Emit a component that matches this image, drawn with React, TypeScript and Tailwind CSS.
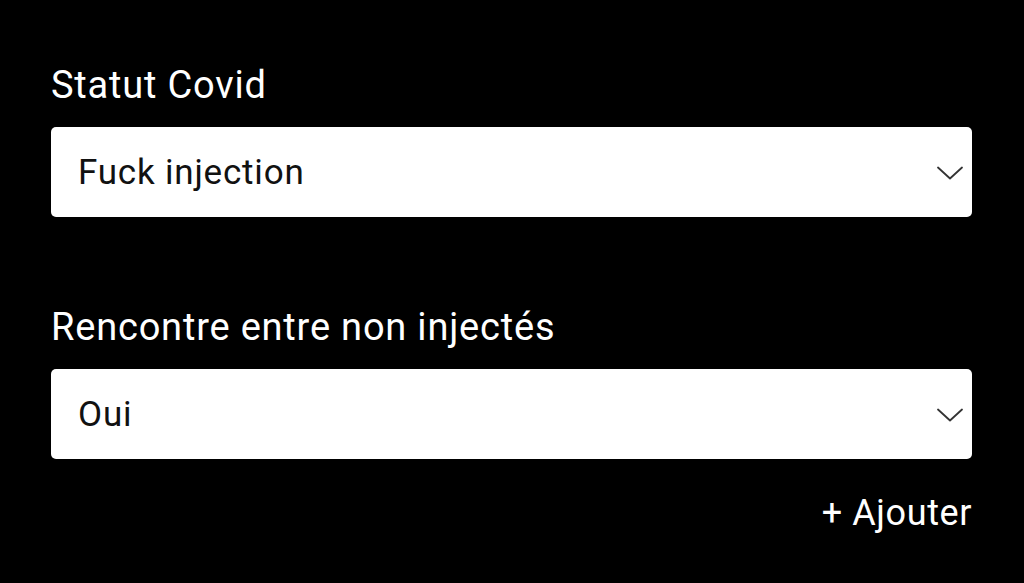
import { type FC } from "react";

interface SelectFieldProps {
  label: string;
  value: string;
  className?: string;
}

const Chevron: FC = () => (
  <svg
    width="26"
    height="14"
    viewBox="0 0 26 14"
    fill="none"
    stroke="#333"
    strokeWidth="1.8"
    strokeLinecap="round"
    strokeLinejoin="round"
    className="mt-[2px]"
  >
    <path d="M1 1.5 L13 12.5 L25 1.5" />
  </svg>
);

const SelectField: FC<SelectFieldProps> = ({ label, value, className }) => (
  <div className={className}>
    <label className="block text-[38px] leading-[44px] tracking-[0.8px] text-white">
      {label}
    </label>
    <div className="mt-[20px] flex h-[90px] items-center justify-between rounded-[5px] bg-white pl-[27px] pr-[9px]">
      <span className="text-[35px] leading-[41px] tracking-[0.8px] text-[#111]">
        {value}
      </span>
      <Chevron />
    </div>
  </div>
);

export default function App() {
  return (
    <div
      className="flex h-[583px] w-[1024px] flex-col bg-black pl-[51px] pr-[52px] pt-[63px]"
      style={{ fontFamily: "Roboto, 'Liberation Sans', sans-serif" }}
    >
      <SelectField label="Statut Covid" value="Fuck injection" />
      <SelectField
        label="Rencontre entre non injectés"
        value="Oui"
        className="mt-[88px]"
      />
      <div className="mt-[33px] flex justify-end">
        <button className="text-[36px] leading-[42px] tracking-[0.6px] text-white">
          + Ajouter
        </button>
      </div>
    </div>
  );
}
